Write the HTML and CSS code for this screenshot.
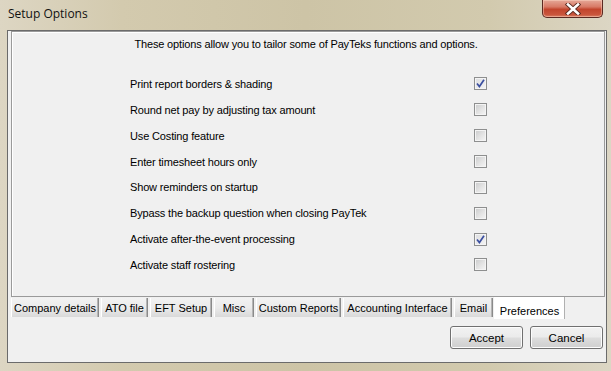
FILE: index.html
```html
<!DOCTYPE html>
<html>
<head>
<meta charset="utf-8">
<link rel="stylesheet" href="styles.css">
</head>
<body>
<div class="window">
  <div class="titlebar">
    <span class="title">Setup Options</span>
    <div class="close">
      <svg width="16" height="12" viewBox="0 0 16 12"><path d="M3 1.5 L13 10.5 M13 1.5 L3 10.5" stroke="#5a2a20" stroke-width="4.4" stroke-linecap="square"/><path d="M3 1.5 L13 10.5 M13 1.5 L3 10.5" stroke="#fff" stroke-width="2.6" stroke-linecap="square"/></svg>
    </div>
  </div>
  <div class="client">
    <div class="panel">
      <p class="intro">These options allow you to tailor some of PayTeks functions and options.</p>
      <div class="options">
        <div class="opt"><span>Print report borders &amp; shading</span><span class="cb checked"><svg width="9" height="9" viewBox="0 0 9 9"><path d="M1 4.5 L3.4 7.5 L8 0.8" fill="none" stroke="#3b4fa0" stroke-width="1.7"/></svg></span></div>
        <div class="opt"><span>Round net pay by adjusting tax amount</span><span class="cb"></span></div>
        <div class="opt"><span>Use Costing feature</span><span class="cb"></span></div>
        <div class="opt"><span>Enter timesheet hours only</span><span class="cb"></span></div>
        <div class="opt"><span>Show reminders on startup</span><span class="cb"></span></div>
        <div class="opt"><span>Bypass the backup question when closing PayTek</span><span class="cb"></span></div>
        <div class="opt"><span>Activate after-the-event processing</span><span class="cb checked"><svg width="9" height="9" viewBox="0 0 9 9"><path d="M1 4.5 L3.4 7.5 L8 0.8" fill="none" stroke="#3b4fa0" stroke-width="1.7"/></svg></span></div>
        <div class="opt"><span>Activate staff rostering</span><span class="cb"></span></div>
      </div>
    </div>
    <div class="tabs">
      <div class="tab w88">Company details</div>
      <div class="tab w47">ATO file</div>
      <div class="tab w62">EFT Setup</div>
      <div class="tab w40">Misc</div>
      <div class="tab w85">Custom Reports</div>
      <div class="tab w109">Accounting Interface</div>
      <div class="tab w39">Email</div>
      <div class="tab active">Preferences</div>
    </div>
    <div class="buttons">
      <button class="btn">Accept</button>
      <button class="btn">Cancel</button>
    </div>
  </div>
</div>
</body>
</html>
```

FILE: styles.css
```css
html, body {
  margin: 0;
  padding: 0;
  width: 611px;
  height: 371px;
  overflow: hidden;
}
.window {
  width: 611px;
  height: 371px;
  box-sizing: border-box;
  display: flex;
  flex-direction: column;
  background: linear-gradient(90deg, #ddd6c3 0%, #d3caae 20%, #cdc4a6 50%, #d2caae 80%, #dcd6c4 100%);
  font-family: "Liberation Sans", Arial, sans-serif;
  font-size: 11px;
  color: #000;
}
.titlebar {
  height: 30px;
  display: flex;
  align-items: flex-start;
  padding-left: 8px;
  flex: none;
}
.title {
  font-family: "Open Sans", "Noto Sans", sans-serif;
  font-size: 12px;
  margin-top: 5px;
  color: #111;
}
.close {
  margin-left: auto;
  margin-right: 8px;
  width: 61px;
  height: 18px;
  box-sizing: border-box;
  border: 1px solid #5b2a22;
  border-top: none;
  border-radius: 0 0 5px 5px;
  background: linear-gradient(180deg, #e5a898 0%, #d87a66 40%, #c2452d 55%, #c9553c 85%, #d97e64 100%);
  box-shadow: inset 0 0 0 1px rgba(255,220,200,0.45);
  display: flex;
  align-items: center;
  justify-content: center;
}
.client {
  flex: 1;
  margin: 0 4px 8px 7px;
  background: #f0f0f0;
  border: 1px solid #6b6b6b;
  display: flex;
  flex-direction: column;
  padding: 0 1px 0 3px;
}
.panel {
  height: 266px;
  box-sizing: border-box;
  border: 1px solid #9a9a9a;
  box-shadow: inset 1px 1px 0 #fff;
  background: #f0f0f0;
  flex: none;
}
.intro {
  margin: 5px 0 0 0;
  text-align: center;
  line-height: 14px;
  letter-spacing: -0.15px;
  padding-right: 4px;
}
.options {
  margin: 20px 0 0 118px;
  width: 357px;
  letter-spacing: -0.15px;
}
.opt {
  height: 25.86px;
  display: flex;
  align-items: center;
  justify-content: space-between;
}
.cb {
  width: 13px;
  height: 13px;
  box-sizing: border-box;
  border: 1px solid #8e8f8f;
  background: linear-gradient(135deg, #c9cacb 0%, #e4e4e4 55%, #f6f6f6 100%);
  box-shadow: inset 0 0 0 1px #f4f4f4;
  display: flex;
  align-items: center;
  justify-content: center;
}
.cb.checked {
  background: linear-gradient(135deg, #dcdde0 0%, #eaeaeb 60%, #f6f6f6 100%);
}
.tabs {
  display: flex;
  align-items: flex-start;
  height: 21px;
  flex: none;
}
.tab {
  height: 19px;
  box-sizing: border-box;
  margin-top: 1px;
  margin-right: 2px;
  border-left: 1px solid #ffffff;
  border-right: 1px solid #8a8a8a;
  box-shadow: inset -1px 0 0 #b5b5b5;
  background: linear-gradient(180deg, #f2f2f2 0%, #ebebeb 50%, #d9d9d9 100%);
  display: flex;
  align-items: center;
  justify-content: center;
  font-size: 11px;
  white-space: nowrap;
}
.w88 { width: 88px; }
.w47 { width: 47px; }
.w62 { width: 62px; }
.w40 { width: 40px; }
.w85 { width: 85px; }
.w109 { width: 109px; }
.w39 { width: 39px; margin-right: 1px; }
.tab.active {
  width: 71px;
  height: 22px;
  margin-top: 0;
  background: #ffffff;
  border-left: 1px solid #ffffff;
  border-right: 1px solid #b0b0b0;
  box-shadow: none;
  padding-top: 5px;
}
.buttons {
  display: flex;
  justify-content: flex-end;
  gap: 7px;
  margin-top: 8px;
  padding-right: 2px;
}
.btn {
  width: 73px;
  height: 23px;
  border: 1px solid #707070;
  border-radius: 3px;
  background: linear-gradient(180deg, #f2f2f2 0%, #ebebeb 48%, #dddddd 52%, #cfcfcf 100%);
  box-shadow: inset 0 0 0 1px #fcfcfc;
  font-family: "Liberation Sans", Arial, sans-serif;
  font-size: 11.5px;
  color: #000;
  padding: 0;
}
```
